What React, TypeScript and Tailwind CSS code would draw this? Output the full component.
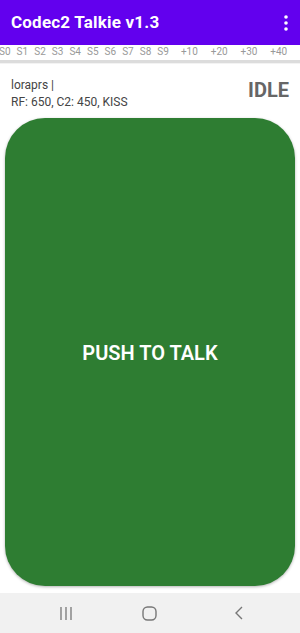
import React from "react";

const sLabels = ["S0","S1","S2","S3","S4","S5","S6","S7","S8","S9"];
const pLabels = ["+10","+20","+30","+40"];

export default function App() {
  return (
    <div className="w-[300px] h-[633px] flex flex-col bg-white overflow-hidden" style={{ fontFamily: "Roboto, 'Noto Sans', sans-serif" }}>
      <div className="h-[45px] bg-[#6200ee] flex items-center justify-between pl-[11px] pr-[12px] shrink-0">
        <span className="text-white font-bold text-[17px] tracking-[0.2px]">Codec2 Talkie v1.3</span>
        <svg width="4" height="16" viewBox="0 0 4 16" fill="white">
          <circle cx="2" cy="2" r="1.8" />
          <circle cx="2" cy="8" r="1.8" />
          <circle cx="2" cy="14" r="1.8" />
        </svg>
      </div>
      <div className="h-[14px] flex items-center text-[10px] text-[#999] leading-none shrink-0 ml-[-1px]">
        {sLabels.map((s) => (
          <span key={s} className="w-[17.6px] shrink-0">{s}</span>
        ))}
        <span className="w-[6px] shrink-0" />
        {pLabels.map((s) => (
          <span key={s} className="w-[29.8px] shrink-0">{s}</span>
        ))}
      </div>
      <div className="h-[3px] bg-[#dcdcdc] mt-[1px] shrink-0" />
      <div className="h-[1px] bg-[#f3f3f3] shrink-0" />
      <div className="flex justify-between items-start pl-[11px] pr-[11px] pt-[13px] shrink-0">
        <div className="flex flex-col text-[12px] text-[#444] leading-[17px]">
          <span>loraprs |</span>
          <span>RF: 650, C2: 450, KISS</span>
        </div>
        <span className="text-[20px] font-bold text-[#666] leading-none mt-[3px]">IDLE</span>
      </div>
      <div className="flex-1 px-[5px] pt-[7px] pb-[7px] flex">
        <div className="flex-1 bg-[#2e7d32] rounded-[40px] shadow-[0_1px_3px_rgba(0,0,0,0.3)] flex items-center justify-center">
          <span className="text-white font-semibold text-[20px] mt-[2px]">PUSH TO TALK</span>
        </div>
      </div>
      <div className="h-[40px] bg-[#f1f1f1] flex items-center shrink-0">
        <div className="w-[66px] shrink-0" />
        <svg className="ml-[-7px]" width="14" height="15" viewBox="0 0 14 15" stroke="#777" strokeWidth="1.3" fill="none">
          <line x1="2" y1="1" x2="2" y2="14" />
          <line x1="7" y1="1" x2="7" y2="14" />
          <line x1="12" y1="1" x2="12" y2="14" />
        </svg>
        <svg className="ml-[69px]" width="15" height="15" viewBox="0 0 15 15" stroke="#777" strokeWidth="1.4" fill="none">
          <rect x="1" y="1" width="13" height="13" rx="4.5" />
        </svg>
        <svg className="ml-[77px]" width="10" height="16" viewBox="0 0 10 16" stroke="#777" strokeWidth="1.4" fill="none">
          <polyline points="8,2 2,8 8,14" />
        </svg>
      </div>
    </div>
  );
}
